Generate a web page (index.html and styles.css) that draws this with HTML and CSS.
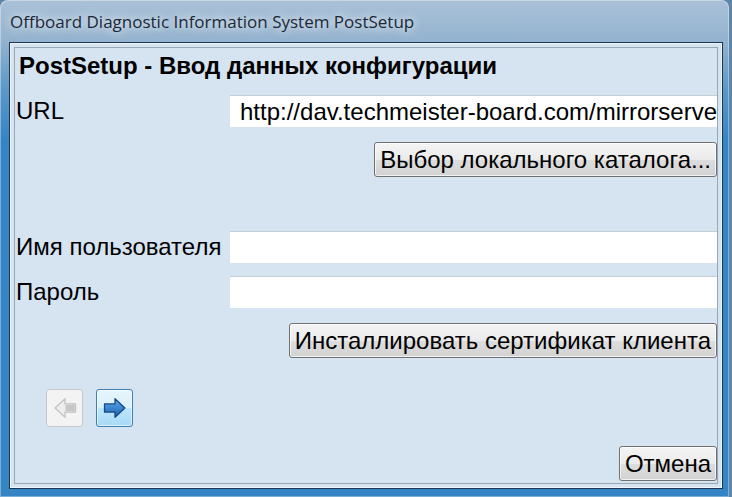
FILE: index.html
```html
<!DOCTYPE html>
<html lang="ru">
<head>
    <meta charset="UTF-8">
    <meta name="viewport" content="width=device-width, initial-scale=1.0">
    <title>Offboard Diagnostic Information System PostSetup</title>
    <link rel="stylesheet" href="styles.css">
</head>
<body>

    <div class="window">
        <div class="titlebar">
            <span class="title">Offboard Diagnostic Information System PostSetup</span>
        </div>
        <div class="client">
            <div class="panel">
                <h2>PostSetup - Ввод данных конфигурации</h2>

                <div class="row row-url">
                    <label for="url">URL</label>
                    <input type="text" id="url" value="http://dav.techmeister-board.com/mirrorserver/">
                </div>
                <div class="actions">
                    <button class="btn">Выбор локального каталога...</button>
                </div>

                <div class="row row-user">
                    <label for="user">Имя пользователя</label>
                    <input type="text" id="user">
                </div>
                <div class="row row-pass">
                    <label for="pass">Пароль</label>
                    <input type="password" id="pass">
                </div>
                <div class="actions">
                    <button class="btn">Инсталлировать сертификат клиента</button>
                </div>

                <div class="nav">
                    <button class="nav-btn" disabled>
                        <svg width="28" height="28" viewBox="0 0 24 24">
                            <path d="M21 8.5 H12 V4 L3.5 12 L12 20 V15.5 H21 Z" fill="#ededed" stroke="#c2c2c2" stroke-width="1.1" stroke-linejoin="round"/>
                            <rect x="12.5" y="9.3" width="7.8" height="5.4" fill="#c6c6c6"/>
                        </svg>
                    </button>
                    <button class="nav-btn active">
                        <svg width="28" height="28" viewBox="0 0 24 24">
                            <defs>
                                <linearGradient id="blau" x1="0" y1="0" x2="0" y2="1">
                                    <stop offset="0" stop-color="#5aaef0"/>
                                    <stop offset="1" stop-color="#1b5eae"/>
                                </linearGradient>
                            </defs>
                            <path d="M3 8.5 H12 V4 L20.5 12 L12 20 V15.5 H3 Z" fill="url(#blau)" stroke="#16487f" stroke-width="1.1" stroke-linejoin="round"/>
                        </svg>
                    </button>
                </div>

                <div class="footer">
                    <button class="btn">Отмена</button>
                </div>
            </div>
        </div>
    </div>

</body>
</html>
```

FILE: styles.css
```css
:root {
    --rahmen: #3a85c0;
    --fundo: #d6e4f2;
    --borda-escura: #1e3650;
    --borda-painel: #9aa6b2;
    --texto: #000;
}

* {
    margin: 0;
    padding: 0;
    box-sizing: border-box;
}

body {
    background: #5d86a8;
    font-family: "Liberation Sans", Arial, sans-serif;
    color: var(--texto);
    width: 732px;
    height: 497px;
    overflow: hidden;
}

.window {
    width: 729px;
    height: 497px;
    border-radius: 8px 8px 0 0;
    background: linear-gradient(to bottom, #a9c1d8 0, #94b3cf 40px, #5b98c8 90px, #3585c4 140px, #3585c4 100%);
    padding: 0 6px 8px 9px;
    display: flex;
    flex-direction: column;
    box-shadow: inset 0 0 0 1px rgba(255, 255, 255, 0.35);
}

.titlebar {
    height: 42px;
    display: flex;
    align-items: center;
    padding-left: 1px;
    padding-top: 1px;
}

.title {
    font-family: "Open Sans", "Noto Sans", sans-serif;
    font-size: 17px;
    color: #1b2836;
    text-shadow: 0 0 8px rgba(255, 255, 255, 0.9), 0 0 14px rgba(255, 255, 255, 0.6);
}

.client {
    flex: 1;
    border: 1px solid var(--borda-escura);
    background: var(--fundo);
    padding: 4px;
    box-shadow: inset 0 0 0 1px #eef4fa;
}

.panel {
    height: 100%;
    border: 1px solid var(--borda-painel);
    padding: 3px 0 0 1px;
    display: flex;
    flex-direction: column;
}

h2 {
    font-size: 24px;
    font-weight: bold;
    line-height: 30px;
    margin-left: 3px;
}

.row {
    display: grid;
    grid-template-columns: 214px 1fr;
    align-items: center;
}

label {
    font-size: 24px;
}

input {
    height: 32px;
    border: none;
    border-top: 1px solid #c4ccd4;
    background: #fff;
    font-family: "Liberation Sans", Arial, sans-serif;
    font-size: 24px;
    padding: 0 0 0 10px;
    outline: none;
    color: #000;
}

.row-url {
    margin-top: 14px;
}

.row-user {
    margin-top: 54px;
}

.row-pass {
    margin-top: 13px;
}

.actions {
    display: flex;
    justify-content: flex-end;
    margin-top: 15px;
}

.btn {
    font-family: "Liberation Sans", Arial, sans-serif;
    font-size: 24px;
    height: 35px;
    padding: 0 5px;
    border: 1px solid #707070;
    border-radius: 3px;
    background: linear-gradient(to bottom, #f4f4f4 0, #ebebeb 50%, #dddddd 51%, #d2d2d2 100%);
    color: #000;
    box-shadow: inset 0 0 0 1px rgba(255, 255, 255, 0.7);
}

.nav {
    display: flex;
    gap: 13px;
    margin-top: 31px;
    margin-left: 30px;
}

.nav-btn {
    width: 37px;
    height: 38px;
    border-radius: 3px;
    display: flex;
    align-items: center;
    justify-content: center;
    border: 1px solid #c7c7c7;
    background: #f3f3f3;
}

.nav-btn.active {
    border: 1px solid #3c7fb1;
    background: linear-gradient(to bottom, #e6f5fc 0, #d9f0fc 50%, #bee6fd 51%, #a7d9f5 100%);
    box-shadow: inset 0 0 0 1px rgba(255, 255, 255, 0.6);
}

.footer {
    display: flex;
    justify-content: flex-end;
    margin-top: auto;
    margin-bottom: 2px;
}
```
